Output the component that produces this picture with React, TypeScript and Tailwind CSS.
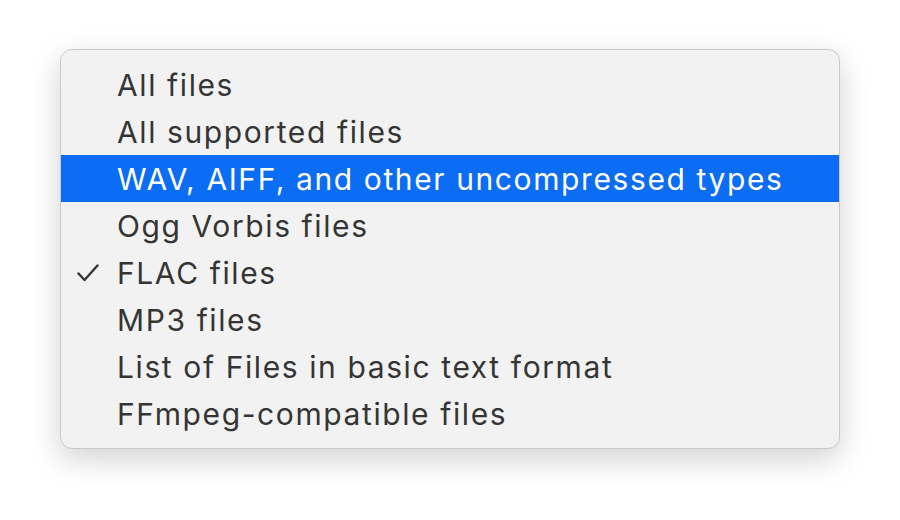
import React from "react";

const items = [
  "All files",
  "All supported files",
  "WAV, AIFF, and other uncompressed types",
  "Ogg Vorbis files",
  "FLAC files",
  "MP3 files",
  "List of Files in basic text format",
  "FFmpeg-compatible files",
];

export default function App() {
  return (
    <div
      className="w-[900px] h-[520px] bg-white flex items-start justify-center pt-[49px]"
      style={{ fontFamily: "Inter, 'Noto Sans', sans-serif" }}
    >
      <div className="w-[780px] h-[400px] bg-[#f2f2f2] rounded-[12px] border border-[#c9c9c9] shadow-[0_10px_30px_rgba(0,0,0,0.18)] py-[11px] overflow-hidden">
        {items.map((t, i) => {
          const sel = i === 2;
          const checked = i === 4;
          return (
            <div
              key={t}
              className={`h-[47px] flex items-center ${sel ? "bg-[#0b6cf4] text-white" : "text-[#353535]"}`}
            >
              <div className="w-[56px] flex justify-end pr-[18px]">
                {checked && (
                  <svg width="22" height="18" viewBox="0 0 22 18" fill="none">
                    <path d="M1.5 9.5 L7.5 16 L20.5 1.5" stroke="#353535" strokeWidth="2.4" strokeLinecap="round" strokeLinejoin="round" />
                  </svg>
                )}
              </div>
              <span className="text-[30px] leading-none tracking-[1.6px]">{t}</span>
            </div>
          );
        })}
      </div>
    </div>
  );
}
